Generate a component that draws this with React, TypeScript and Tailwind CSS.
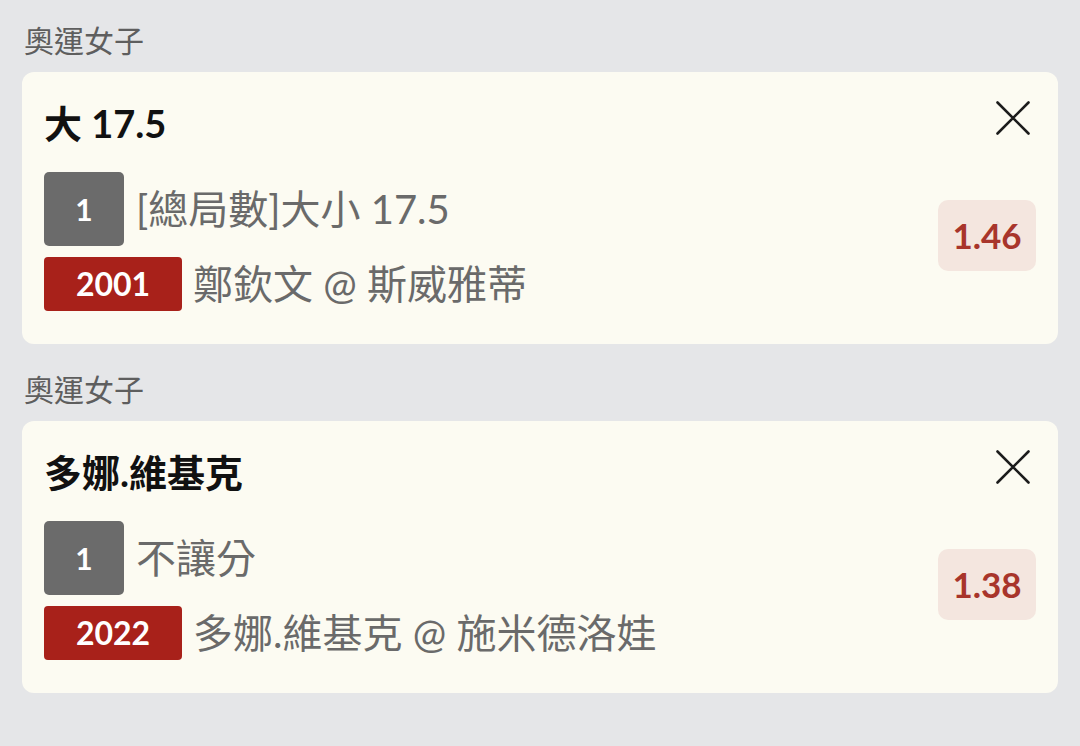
import React from "react";

type Bet = {
  league: string;
  title: string;
  num: string;
  market: string;
  code: string;
  match: string;
  odds: string;
};

const bets: Bet[] = [
  {
    league: "奧運女子",
    title: "大 17.5",
    num: "1",
    market: "[總局數]大小 17.5",
    code: "2001",
    match: "鄭欽文 @ 斯威雅蒂",
    odds: "1.46",
  },
  {
    league: "奧運女子",
    title: "多娜.維基克",
    num: "1",
    market: "不讓分",
    code: "2022",
    match: "多娜.維基克 @ 施米德洛娃",
    odds: "1.38",
  },
];

const CloseIcon = () => (
  <svg width="34" height="34" viewBox="0 0 34 34" className="mr-[6px] shrink-0">
    <path d="M1.5 1.5 L32.5 32.5 M32.5 1.5 L1.5 32.5" stroke="#1c1c1c" strokeWidth="2.6" strokeLinecap="round" />
  </svg>
);

const BetCard: React.FC<{ bet: Bet; first: boolean }> = ({ bet, first }) => (
  <section className={first ? "pt-[20px]" : "pt-[25px]"}>
    <div className="px-[24px] text-[30px] leading-[40px] text-[#5e5e5e]">{bet.league}</div>
    <div className="mx-[22px] mt-[12px] rounded-[12px] bg-[#fcfbf2] pl-[22px] pr-[22px] pt-[29px] pb-[33px]">
      <div className="flex items-start justify-between">
        <div className="text-[38px] font-bold leading-[44px] text-[#111]">{bet.title}</div>
        <CloseIcon />
      </div>
      <div className="mt-[27px] flex items-start justify-between">
        <div className="flex flex-col gap-[11px]">
          <div className="flex items-center">
            <div className="flex h-[74px] w-[80px] items-center justify-center rounded-[5px] bg-[#6b6b6b] text-[30px] font-bold text-white">
              {bet.num}
            </div>
            <span className="ml-[12px] text-[40px] leading-[48px] text-[#6a6a6a]">{bet.market}</span>
          </div>
          <div className="flex items-center">
            <div className="flex h-[54px] w-[138px] items-center justify-center rounded-[4px] bg-[#a8211a] text-[32px] font-bold text-white">
              {bet.code}
            </div>
            <span className="ml-[11px] text-[40px] leading-[48px] text-[#6a6a6a]">{bet.match}</span>
          </div>
        </div>
        <div className="mt-[28px] flex h-[71px] w-[98px] items-center justify-center rounded-[10px] bg-[#f4e6df] text-[35px] font-bold text-[#a8352b]">
          {bet.odds}
        </div>
      </div>
    </div>
  </section>
);

export default function App() {
  return (
    <div
      className="min-h-[746px] w-[1080px] bg-[#e5e6e8]"
      style={{ fontFamily: 'Lato, "Noto Sans CJK TC", sans-serif' }}
    >
      {bets.map((b, i) => (
        <BetCard key={i} bet={b} first={i === 0} />
      ))}
    </div>
  );
}
